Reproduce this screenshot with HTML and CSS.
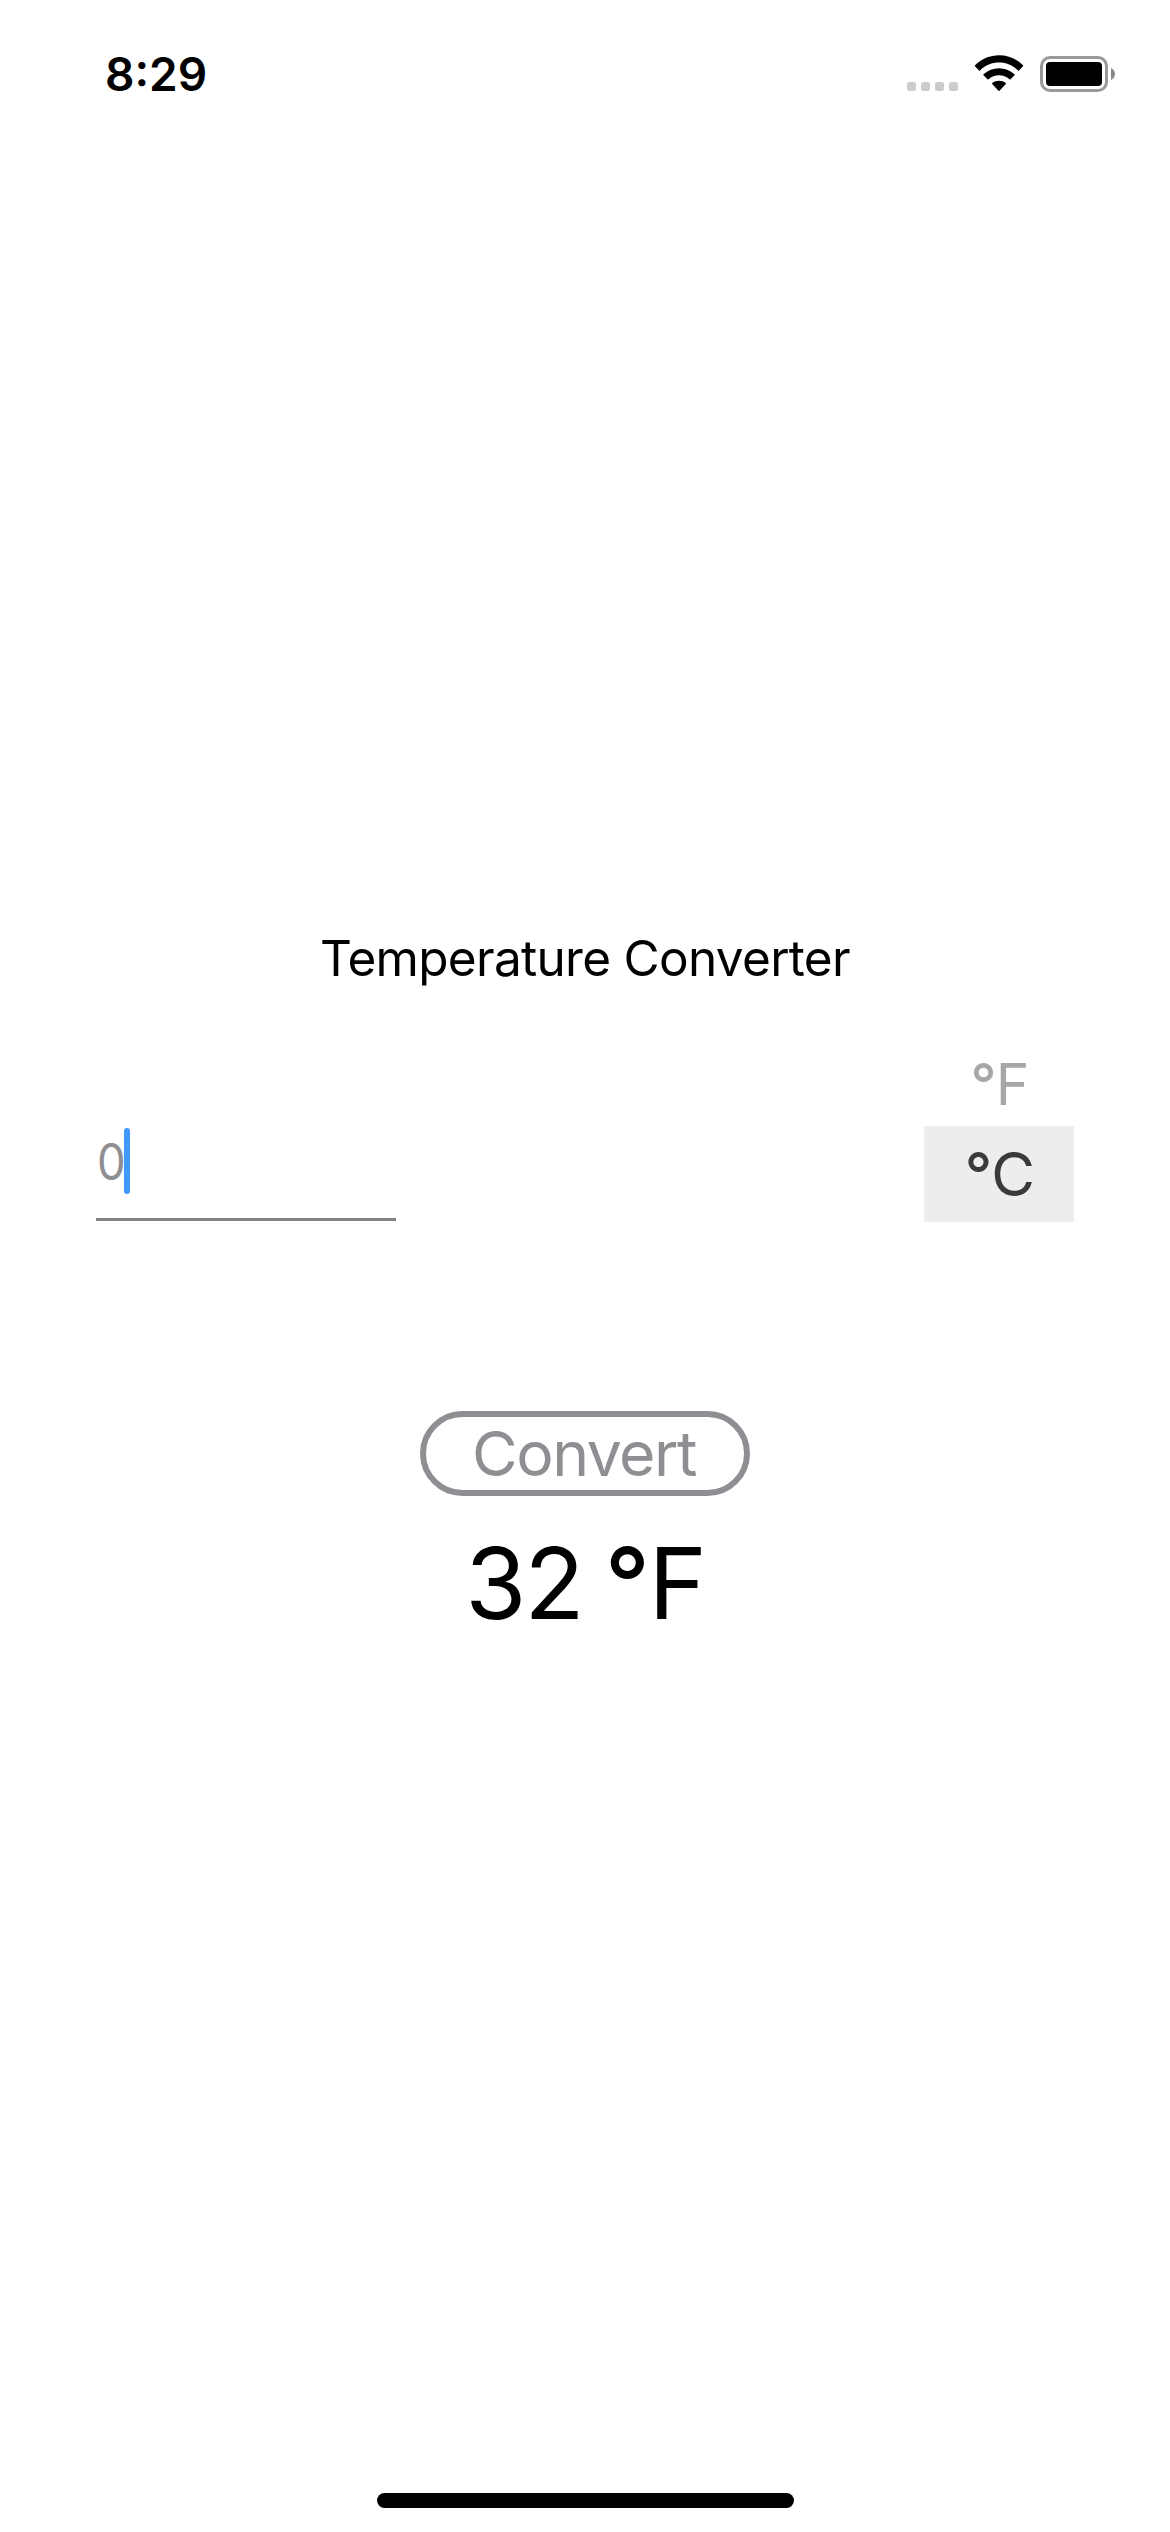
FILE: index.html
```html
<!DOCTYPE html>
<html lang="en">
<head>
<meta charset="utf-8">
<title>Temperature Converter</title>
<link rel="stylesheet" href="styles.css">
</head>
<body>
<div class="screen">
  <header class="status">
    <span class="time">8:29</span>
    <div class="indicators">
      <div class="dots"><i></i><i></i><i></i><i></i></div>
      <svg class="wifi" width="50" height="38" viewBox="0 0 50 38">
        <path d="M1 11.3Q0.5 10.8 1 10.3C14-3.1 36-3.1 49 10.3Q49.500 10.800 49 11.300L45 15.400Q44.500 15.900 44 15.400C33.500 4.900 16.500 4.900 6 15.400Q5.500 15.900 5 15.400Z"/>
        <path d="M9.500 20.200Q9 19.700 9.500 19.200C18 11.100 32 11.100 40.500 19.200Q41 19.700 40.500 20.200L36.500 24.200Q36 24.700 35.500 24.200C29.700 19 20.300 19 14.500 24.200Q14 24.700 13.500 24.200Z"/>
        <path d="M18.200 29Q17.700 28.500 18.200 28C22 24.900 28 24.900 31.800 28Q32.300 28.500 31.800 29L25.500 35.800Q25 36.300 24.500 35.800Z"/>
      </svg>
      <div class="battery"><div class="level"></div></div>
      <svg class="nub" width="4" height="12" viewBox="0 0 4 12"><path d="M0 0C2.200 1 4 3.200 4 6S2.200 11 0 12Z"/></svg>
    </div>
  </header>
  <main class="content">
    <h1 class="title">Temperature Converter</h1>
    <div class="entry">
      <div class="field"><span class="placeholder">0</span><span class="caret"></span></div>
      <div class="picker">
        <div class="option"><span class="degree">°</span>F</div>
        <div class="option selected"><span class="degree">°</span>C</div>
      </div>
    </div>
    <button class="convert">Convert</button>
    <div class="result">32 <span class="degree">°</span>F</div>
  </main>
  <div class="home"></div>
</div>
</body>
</html>
```

FILE: styles.css
```css
* { box-sizing: border-box; }
body { margin: 0; background: #fff; font-family: Inter, "Liberation Sans", sans-serif; color: #000; }
.screen { width: 1170px; height: 2532px; display: flex; flex-direction: column; align-items: center; }
.status { width: 100%; height: 141px; flex: none; display: flex; justify-content: space-between; align-items: flex-start; padding: 54px 55px 0 105px; }
.time { font-size: 46px; line-height: 41px; font-weight: 600; letter-spacing: 0; }
.indicators { display: flex; align-items: flex-start; }
.dots { display: flex; gap: 5px; padding-top: 28px; margin-right: 16px; }
.dots i { width: 9px; height: 9px; border-radius: 2.5px; background: #ccc; }
.wifi { margin-right: 16px; margin-top: 1px; }
.battery { width: 68px; height: 36px; margin-top: 2px; border: 3px solid #999; border-radius: 10px; padding: 3px; }
.level { width: 56px; height: 24px; background: #000; border-radius: 4px; }
.nub { margin: 14px 0 0 3px; fill: #888; }
.content { width: 978px; flex: 1; display: flex; flex-direction: column; align-items: center; padding-top: 787px; }
.title { margin: 0; font-size: 49.5px; line-height: 60px; font-weight: 400; letter-spacing: -0.7px; white-space: nowrap; }
.entry { width: 100%; display: flex; justify-content: space-between; align-items: flex-end; margin-top: 66px; }
.field { width: 300px; height: 93px; margin-bottom: 1px; border-bottom: 3px solid #808085; display: flex; align-items: flex-start; }
.placeholder { width: 28px; padding-left: 1px; font-size: 50px; line-height: 68px; color: #8e8e93; transform: scaleX(0.91); transform-origin: left; }
.caret { width: 6px; height: 66px; border-radius: 3px; background: #4099ff; z-index: 1; }
.picker { width: 150px; text-align: center; }
.option { height: 60px; margin-bottom: 12px; padding-left: 2px; font-size: 57px; line-height: 61px; color: #a7a7a7; }
.selected { height: 96px; margin: 0; font-size: 60px; line-height: 96px; background: #ededed; color: #3a3a3a; }
.degree { font-weight: 550; letter-spacing: -0.015em; }
.convert { width: 330px; height: 85px; margin-top: 189px; padding: 0 2px 0 0; border: 6px solid #8e8e93; border-radius: 43px; background: none; color: #8e8e93; font-family: inherit; font-size: 62.5px; line-height: 73px; letter-spacing: -1.5px; }
.result { margin-top: 27px; font-size: 99px; line-height: 120px; letter-spacing: -2.3px; word-spacing: -3px; white-space: pre; }
.home { width: 417px; height: 15px; margin-bottom: 24px; border-radius: 8px; background: #000; flex: none; }
```
